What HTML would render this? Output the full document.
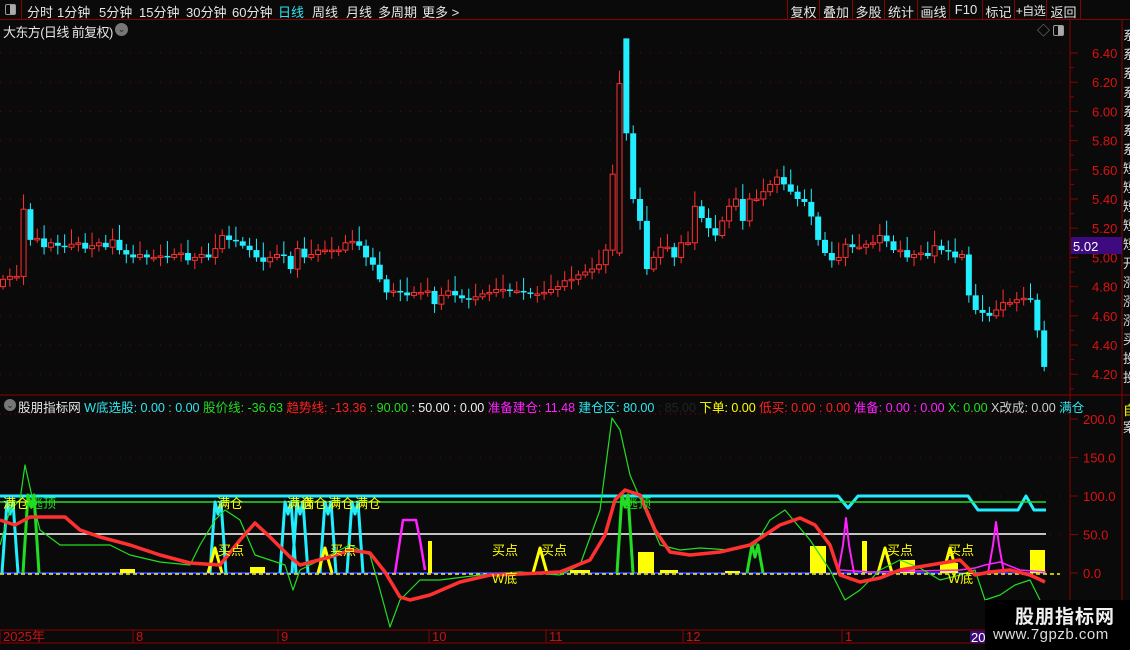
<!DOCTYPE html>
<html><head><meta charset="utf-8">
<style>
*{margin:0;padding:0;box-sizing:border-box}
body{width:1130px;height:650px;background:#0a0a0a;overflow:hidden;position:relative;font-family:"Liberation Sans","Noto Sans CJK SC",sans-serif;color:#ddd;font-size:12px}
.t{position:absolute;white-space:nowrap}
#tb{position:absolute;left:0;top:0;width:1130px;height:20px;border-bottom:1px solid #8b0000}
#tb span{position:absolute;top:2px;font-size:13px;color:#e6e6e6}
.btn{position:absolute;top:0;height:19px;border-left:1px solid #8b0000;font-size:13px;color:#e6e6e6;padding:2px 0 0;text-align:center;overflow:hidden}
svg{position:absolute;left:0;top:0}
</style></head><body>
<div id="tb">
<div style="position:absolute;left:0;top:0;width:22px;height:19px;border-right:1px solid #8b0000"><div style="position:absolute;left:5px;top:4px;width:11px;height:11px;border:1px solid #999;border-radius:2px;background:linear-gradient(90deg,#0a0a0a 45%,#aaa 45%)"></div></div>
<span style="left:27px">分时</span><span style="left:57px">1分钟</span><span style="left:99px">5分钟</span><span style="left:139px">15分钟</span><span style="left:186px">30分钟</span><span style="left:232px">60分钟</span><span style="left:278px;color:#2ee6f0">日线</span><span style="left:312px">周线</span><span style="left:346px">月线</span><span style="left:378px">多周期</span><span style="left:422px">更多 &gt;</span>
<div class="btn" style="left:787px;width:32px">复权</div><div class="btn" style="left:819px;width:33px">叠加</div><div class="btn" style="left:852px;width:32px">多股</div><div class="btn" style="left:884px;width:33px">统计</div><div class="btn" style="left:917px;width:32px">画线</div><div class="btn" style="left:949px;width:33px">F10</div><div class="btn" style="left:982px;width:32px">标记</div><div class="btn" style="left:1014px;width:32px;font-size:12px;letter-spacing:-0.5px">+自选</div><div class="btn" style="left:1046px;width:34px">返回</div>
<div class="btn" style="left:1080px;width:50px"></div>
</div>
<div class="t" style="left:3px;top:22px;font-size:13px;color:#e6e6e6;letter-spacing:-0.6px">大东方(日线 前复权)</div>
<div class="t" style="left:115px;top:23px;width:13px;height:13px;border-radius:50%;background:#777;color:#222;font-size:9px;text-align:center;line-height:13px">⌄</div>
<div class="t" style="left:1037px;top:20px;color:#888;font-size:13px">◇</div>
<div class="t" style="left:1053px;top:25px;width:11px;height:11px;border:1px solid #999;border-radius:2px;background:linear-gradient(90deg,#0a0a0a 45%,#aaa 45%)"></div>

<svg id="s" width="1130" height="650"></svg>

<div class="t" style="left:4px;top:399px;width:12px;height:12px;border-radius:50%;background:#777;color:#222;font-size:9px;text-align:center;line-height:12px">⌄</div>
<div class="t" style="left:18px;top:397px;font-size:12.6px;color:#e6e6e6;letter-spacing:-0.05px">股朋指标网 <span style="color:#2ee6f0">W底选股: 0.00 : 0.00</span> <span style="color:#22dd22">股价线: -36.63</span> <span style="color:#ff2020">趋势线: -13.36</span> <span style="color:#22dd22">: 90.00</span> <span style="color:#eee">: 50.00 : 0.00</span> <span style="color:#ff22ff">准备建仓: 11.48</span> <span style="color:#2ee6f0">建仓区: 80.00</span> <span style="color:#222">: 85.00</span> <span style="color:#ffff00">下单: 0.00</span> <span style="color:#ff2020">低买: 0.00 : 0.00</span> <span style="color:#ff22ff">准备: 0.00 : 0.00</span> <span style="color:#22dd22">X: 0.00</span> <span style="color:#ccc">X改成: 0.00</span> <span style="color:#2ee6f0">满仓</span></div>

<div class="t" style="left:985px;top:600px;width:145px;height:50px;background:#000"></div>
<div class="t" style="left:1015px;top:602px;font-size:19px;font-weight:bold;color:#f0f0f0;letter-spacing:1px">股朋指标网</div>
<div class="t" style="left:993px;top:626px;font-size:15px;color:#ddd;letter-spacing:.5px">www.7gpzb.com</div>

<script>
const S=document.getElementById('s');let h='';
const R='#ff3030',C='#22eeff',G='#22dd22',Y='#ffff00',M='#ff22ff',W='#ffffff',DR='#8b0000';
h+=`<line x1="1070" y1="20" x2="1070" y2="643" stroke="${DR}"/>`;
h+=`<line x1="1122" y1="20" x2="1122" y2="643" stroke="${DR}"/>`;
h+=`<line x1="0" y1="395" x2="1130" y2="395" stroke="${DR}"/>`;
h+=`<line x1="0" y1="630" x2="1130" y2="630" stroke="${DR}"/>`;
h+=`<line x1="0" y1="643" x2="1130" y2="643" stroke="${DR}"/>`;
h+=`<line x1="0" y1="414" x2="1070" y2="414" stroke="${DR}" stroke-dasharray="1 4"/>`;
const py=p=>53+(6.4-p)*146;
for(let p=4.2;p<6.45;p+=0.2){let y=py(p);h+=`<line x1="0" y1="${y}" x2="1068" y2="${y}" stroke="#7a0000" stroke-dasharray="1 9"/><line x1="1070" y1="${y}" x2="1078" y2="${y}" stroke="${DR}"/><line x1="1070" y1="${y+14.6}" x2="1074" y2="${y+14.6}" stroke="${DR}"/><text x="1092" y="${y+5}" fill="#dd1111" font-size="13" font-family="Liberation Sans">${p.toFixed(2)}</text>`;}
h+=`<rect x="1071" y="237" width="51" height="17" fill="#3d0a80"/><text x="1073" y="251" fill="#fff" font-size="13" font-family="Liberation Sans">5.02</text>`;
const cl=[4.85,4.87,4.87,5.33,5.12,5.13,5.07,5.10,5.08,5.07,5.09,5.10,5.06,5.08,5.10,5.07,5.12,5.05,5.02,5.00,5.02,5.00,5.00,5.01,5.00,5.02,5.03,4.98,5.00,5.02,5.00,5.06,5.15,5.12,5.11,5.08,5.05,5.00,4.97,5.00,5.02,5.01,4.92,5.06,5.00,5.02,5.05,5.05,5.05,5.05,5.10,5.11,5.08,5.00,4.95,4.85,4.76,4.77,4.76,4.74,4.76,4.76,4.77,4.68,4.74,4.77,4.74,4.72,4.71,4.73,4.75,4.76,4.78,4.78,4.77,4.77,4.76,4.75,4.75,4.76,4.78,4.80,4.84,4.85,4.88,4.90,4.92,4.95,5.05,5.57,6.19,5.85,5.40,5.25,4.92,5.00,5.07,5.07,5.00,5.10,5.10,5.35,5.27,5.20,5.15,5.25,5.35,5.40,5.25,5.40,5.40,5.45,5.50,5.55,5.50,5.45,5.40,5.38,5.28,5.12,5.03,4.98,5.00,5.09,5.07,5.07,5.09,5.10,5.15,5.11,5.05,5.05,5.00,5.02,5.03,5.01,5.08,5.05,5.04,5.00,5.02,4.74,4.64,4.62,4.60,4.64,4.69,4.69,4.71,4.72,4.71,4.50,4.25];
let prev=4.80;
cl.forEach((c,i)=>{let x=3+i*6.85;let o=prev;
 if(i==91){o=6.50;} if(i==90){o=5.03;}
 let hi=Math.max(o,c)+0.03+((i*37)%7)*0.012,lo=Math.min(o,c)-0.02-((i*53)%5)*0.01;
 if(i==91)hi=6.50;
 let up=c>=o,col=up?R:C;let y1=py(Math.max(o,c)),y2=py(Math.min(o,c));if(y2-y1<1.5)y2=y1+1.5;
 h+=`<line x1="${x}" y1="${py(hi)}" x2="${x}" y2="${py(lo)}" stroke="${col}"/>`;
 if(up)h+=`<rect x="${x-2.5}" y="${y1}" width="5" height="${y2-y1}" fill="#0a0a0a" stroke="${col}"/>`;
 else h+=`<rect x="${x-3}" y="${y1}" width="6" height="${y2-y1}" fill="${col}"/>`;
 prev=c;});
const vy=v=>573-v*0.77;
for(let v=0;v<=200;v+=50){let y=vy(v);h+=`<line x1="1070" y1="${y}" x2="1078" y2="${y}" stroke="${DR}"/><text x="1083" y="${y+5}" fill="#dd1111" font-size="13" font-family="Liberation Sans">${v.toFixed(2).replace('.00','.0')}</text>`;
 if(v>0&&v<200)h+=`<line x1="0" y1="${y}" x2="1068" y2="${y}" stroke="#7a0000" stroke-dasharray="1 9"/>`;}
const pl=(pts,col,w)=>`<polyline points="${pts}" fill="none" stroke="${col}" stroke-width="${w}" stroke-linejoin="round"/>`;
h+=pl('0,496 838,496 848,508 858,496 968,496 978,510 1018,510 1026,496 1034,510 1046,510',C,3);
h+=pl('0,502 1046,502',G,1.5);
h+=pl('0,534 1046,534',W,1.5);
h+=`<line x1="0" y1="573" x2="1046" y2="573" stroke="#2233ff" stroke-width="2"/><line x1="0" y1="574" x2="1060" y2="574" stroke="${Y}" stroke-dasharray="4 3" stroke-width="1.5"/>`;
[[638,552,16],[810,546,16],[862,541,5],[900,560,15],[1030,550,15],[428,541,4],[940,563,18],[250,567,15],[120,569,15],[570,570,20],[660,570,18],[725,571,15]].forEach(b=>h+=`<rect x="${b[0]}" y="${b[1]}" width="${b[2]}" height="${573-b[1]}" fill="${Y}"/>`);
const sp=(x,top,col,w)=>pl(`${x-8},573 ${x-3},${top} ${x},${top+12} ${x+3},${top} ${x+8},573`,col,w);
[10,218,288,300,328,355].forEach(x=>h+=sp(x,502,C,3));
[[31,495],[625,495],[755,545]].forEach(a=>h+=sp(a[0],a[1],G,3));
[215,325,540,885,950].forEach(x=>h+=pl(`${x-7},573 ${x},548 ${x+7},573`,Y,3));
h+=pl('395,573 400,540 403,520 416,520 420,540 425,570',M,2.5);
h+=pl('838,573 843,545 846,518 849,545 854,573',M,2);
h+=pl('988,573 993,545 996,522 999,545 1004,573',M,2);
h+=pl('840,570 870,572 960,570 975,568 985,565 1000,562 1020,570 1046,572',M,1.5);
h+=pl('0,545 10,510 20,500 25,465 35,510 40,530 60,545 90,545 110,545 130,555 160,562 190,565 200,545 215,520 225,510 240,520 255,555 270,560 285,565 293,590 300,570 320,560 350,545 370,555 380,590 390,627 400,600 420,580 440,580 480,575 520,572 560,575 580,565 600,510 612,418 620,430 630,475 645,510 660,545 680,550 700,548 730,550 755,545 770,520 785,510 810,540 830,570 845,600 860,590 880,570 900,560 920,568 940,580 960,575 975,570 985,600 1000,595 1015,585 1030,580 1040,600',G,1.2);
h+=pl('0,520 15,525 30,517 45,517 65,517 80,530 100,537 130,545 160,555 190,563 220,565 240,540 255,523 270,537 290,557 300,565 330,557 350,550 370,553 385,572 400,597 410,600 430,595 460,582 490,575 520,574 560,572 590,560 605,535 615,500 625,490 640,495 655,530 670,552 690,555 720,552 750,545 780,525 800,518 815,525 830,545 840,575 860,582 880,578 900,570 930,565 960,560 975,575 990,572 1010,570 1030,575 1045,582',R,3.5);
const tx=(x,y,s,c)=>`<text x="${x}" y="${y}" fill="${c}" font-size="13" font-family="Liberation Sans,Noto Sans CJK SC,sans-serif">${s}</text>`;
[3,217,287,301,328,355].forEach(x=>h+=tx(x,508,'满仓',Y));
h+=tx(30,508,'逃顶',G);h+=tx(625,508,'逃顶',G);
[218,330,492,541,887,948].forEach(x=>h+=tx(x,555,'买点',Y));
h+=tx(492,583,'W底',Y);h+=tx(948,583,'W底',Y);
[['2025年',3],['8',136],['9',281],['10',432],['11',549],['12',686],['1',845]].forEach(d=>{h+=`<line x1="${d[1]-3}" y1="630" x2="${d[1]-3}" y2="643" stroke="${DR}"/>`+tx(d[1],641,d[0],'#cc1111');});
h+=`<rect x="970" y="631" width="16" height="12" fill="#3d0a80"/>`+tx(971,642,'20','#fff');
'系系系系系系系短短短短短开涨涨涨买投投'.split('').forEach((c,i)=>h+=`<text x="1123" y="${40+i*19}" fill="#ddd" font-size="13" font-family="Noto Sans CJK SC,sans-serif">${c}</text>`);
h+=`<text x="1123" y="415" fill="${Y}" font-size="13" font-family="Noto Sans CJK SC,sans-serif">自</text><text x="1123" y="432" fill="#ddd" font-size="13" font-family="Noto Sans CJK SC,sans-serif">案</text>`;
S.innerHTML=h;
</script>
</body></html>
